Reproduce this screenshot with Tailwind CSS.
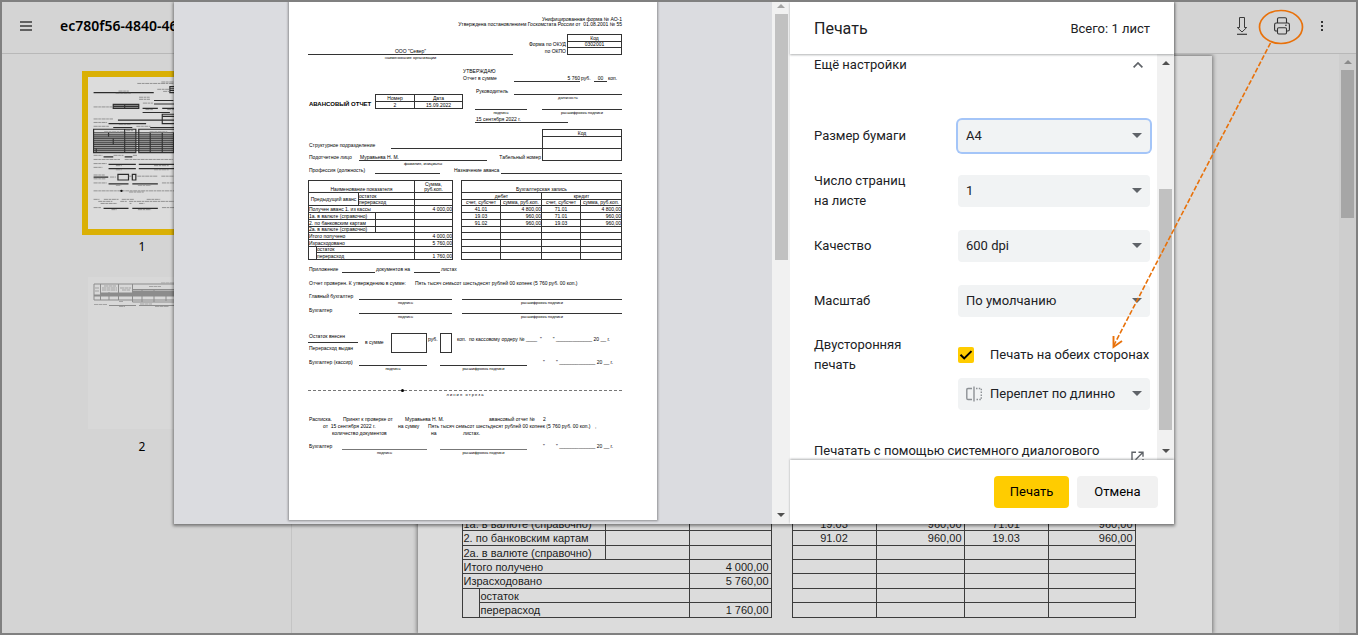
<!DOCTYPE html>
<html lang="ru">
<head>
<meta charset="utf-8">
<meta name="viewport" content="width=device-width, initial-scale=1">
<title>Печать</title>
<script src="https://cdn.jsdelivr.net/npm/@tailwindcss/browser@4"></script>
</head>
<body class="font-['Roboto',sans-serif] text-[#202124]">
<div class="relative flex h-screen flex-col overflow-hidden border-2 border-[#808080] bg-[#d4d4d4]">

  <!-- Viewer toolbar -->
  <header class="flex h-[52px] shrink-0 items-center border-b border-[#b8b8b8] pl-[18px] pr-[14px]">
    <button type="button" aria-label="Меню" class="mt-[-4px]">
      <svg class="block" width="12" height="10" viewBox="0 0 12 10" stroke="#3a3a3a" stroke-width="1.4"><path d="M0 1h12M0 5h12M0 9h12"/></svg>
    </button>
    <h1 class="mb-1 ml-7 font-['Noto_Sans',sans-serif] text-sm font-semibold text-black">ec780f56-4840-46</h1>
    <div class="mb-1 ml-auto flex items-center">
      <button type="button" aria-label="Скачать" class="flex w-10 justify-center">
        <svg width="12" height="18" viewBox="0 0 12 18" fill="none" stroke="#3a3a3a"><path d="M3.500 .5h5v10h2.200L6 15 1.300 10.500h2.200z"/><path d="M1 17.300h10" stroke-width="1.200"/></svg>
      </button>
      <button type="button" aria-label="Печать документа" class="flex w-10 justify-center">
        <svg width="16" height="18" viewBox="0 0 16 18" fill="none" stroke="#333" stroke-width="1.100"><path d="M3.500 6V2q0-1.300 1.300-1.300h6.400q1.300 0 1.300 1.300v4"/><path d="M3.500 14H2.200Q.6 14 .6 12.500V7.700Q.6 6 2.200 6h11.600q1.600 0 1.600 1.700v4.800q0 1.500-1.600 1.500h-1.300"/><rect x="3.500" y="10.800" width="9" height="6.200" rx="1.200"/><path d="M11 8.300h1.800"/></svg>
      </button>
      <button type="button" aria-label="Ещё" class="flex w-10 justify-center">
        <svg width="4" height="12" viewBox="0 0 4 12" fill="#333"><path d="M1 1h2v2H1zM1 5h2v2H1zM1 9h2v2H1z"/></svg>
      </button>
    </div>
  </header>

  <div class="flex min-h-0 flex-1">
    <!-- Thumbnails -->
    <aside class="flex w-[290px] shrink-0 flex-col items-center border-r border-[#c4c4c4] pr-[9px] pt-[17px] font-['Noto_Sans',sans-serif] text-xs text-black">
      <div class="border-[6px] border-[#dab005] bg-[#dcdcdc]">
        <svg class="block" width="108" height="152" viewBox="0 0 368 518" fill="none" stroke="#2c2c2c">
          <g stroke-width="4">
            <path d="M19 53h205M225 80h66M225 92h108M186 107h52M253 107h80M186 121h93M102 147h231M70 159h128M86 172h65M212 172h121M53 272h33M125 272h26M70 298h93M173 298h160M70 312h93M173 312h160M19 341h50M70 364h68M151 364h87M53 448h85M151 448h87"/>
            <path d="M279 33h54v20h-54zM279 40h54M279 46h54M86 93h87v14H86zM86 100h87M125 93v14M253 127h80v32h-80zM253 134h80"/>
            <path d="M19 178h144v80H19zM173 178h160v80H173zM125 178v80M212 190v68M253 190v68M292 190v68M86 210v20M70 190v14M28 244v14"/>
            <path d="M102 332h36v19h-36zM151 332h12v19h-12z"/>
          </g>
          <path d="M19 190h314M19 197h314M19 204h314M19 210h314M19 217h314M19 224h314M19 230h314M19 237h314M19 244h314M19 250h314" stroke-width="3"/>
          <path d="M19 193h144v64H19zM173 193h160v64H173z" fill="#444" fill-opacity=".4" stroke="none"/>
          <path d="M86 93h87v14H86z" fill="#444" fill-opacity=".4" stroke="none"/>
          <g stroke="#8a8a8a" stroke-width="3" stroke-dasharray="14 2 9 2">
            <path d="M250 17h83M168 22h165M104 48h35M94 56h54M236 42h42M256 49h22M174 69h36M174 76h37M187 89h34M19 102h66M196 111h25M270 111h40M19 143h66M19 155h46M105 162h40M19 168h54M165 168h48M55 187h68M130 183h24M210 187h60M19 267h30M87 267h34M153 267h14M19 281h90M125 281h165M19 295h45M19 308h30M95 302h20M225 302h50M95 316h20M225 316h50M19 334h38M75 341h20M139 338h10M168 338h70M250 338h70M19 347h40M19 361h45M95 369h18M170 369h45M252 361h70M19 388h314M140 392h50M19 417h20M54 417h50M115 417h42M200 417h46M35 424h48M110 424h22M140 424h165M43 431h56M142 431h6M174 431h18M19 445h26M80 452h18M170 452h45M252 445h70"/>
          </g>
          <circle cx="114" cy="388" r="4" fill="#111" stroke="none"/>
        </svg>
      </div>
      <p class="h-[42px] pt-1 leading-4">1</p>
      <div class="bg-[#d8d8d8]">
        <svg class="block" width="108" height="152" viewBox="0 0 108 152" fill="none" stroke="#8c8c8c">
          <path d="M6 7h102M6 7v16h102M12.500 7v16M30.500 7v16M44.500 7v18H108M66 13v12M54 13v12M78 15v9M44.500 12.500H108M21 15v8"/>
          <path d="M13 16.500h31M45 14.500h63M6 18.500h102M45 16.500h63" stroke-width="2"/>
          <path d="M21 28.500h27M51 28.500h57"/>
          <path d="M7 11h4M7 14h4M16 9h12M14 11h15M14 13h15M32 11h11M34 13h8M61 9.500h12M73 6h35M6 27.500h13M52 27h12M31 24.500h4M31 29.500h6M67 29.500h14" stroke="#a3a3a3" stroke-dasharray="4 .5"/>
        </svg>
      </div>
      <p class="h-8 pt-[10px] leading-4">2</p>
    </aside>

    <!-- Opened document -->
    <main class="flex min-w-0 flex-1 justify-center overflow-hidden pr-[2px] pt-[2px]">
      <article class="w-[794px] shrink-0 bg-[#dcdcdc] pl-[44px] pt-[460px] font-['Liberation_Sans',sans-serif] text-[11px] leading-3 text-[#1c1c1c] shadow-[0_0_4px_1px_rgba(0,0,0,0.45)]">
        <div class="flex items-start gap-5">
          <table class="w-[309px] table-fixed border-collapse [&_td]:border [&_td]:border-[#3c3c3c] [&_td]:p-0 [&_td]:pl-px [&_td]:pr-[2px]">
            <colgroup><col class="w-[17px]"><col class="w-[126px]"><col class="w-[84px]"><col class="w-[82px]"></colgroup>
            <tbody>
              <tr class="h-[14px]"><td colspan="2">1а. в валюте (справочно)</td><td></td><td></td></tr>
              <tr class="h-[15px]"><td colspan="2">2. по банковским картам</td><td></td><td></td></tr>
              <tr class="h-[14px]"><td colspan="2">2а. в валюте (справочно)</td><td></td><td></td></tr>
              <tr class="h-[14px]"><td colspan="3">Итого получено</td><td class="text-right">4 000,00</td></tr>
              <tr class="h-[15px]"><td colspan="3">Израсходовано</td><td class="text-right">5 760,00</td></tr>
              <tr class="h-[14px]"><td rowspan="2"></td><td colspan="2">остаток</td><td></td></tr>
              <tr class="h-[15px]"><td colspan="2">перерасход</td><td class="text-right">1 760,00</td></tr>
            </tbody>
          </table>
          <table class="w-[343px] table-fixed border-collapse [&_td]:border [&_td]:border-[#3c3c3c] [&_td]:p-0 [&_td]:px-[2px] [&_td:nth-child(even)]:text-right [&_td:nth-child(odd)]:text-center">
            <colgroup><col class="w-[84px]"><col class="w-[88px]"><col class="w-[84px]"><col class="w-[87px]"></colgroup>
            <tbody>
              <tr class="h-[14px]"><td>19.03</td><td>960,00</td><td>71.01</td><td>960,00</td></tr>
              <tr class="h-[15px]"><td>91.02</td><td>960,00</td><td>19.03</td><td>960,00</td></tr>
              <tr class="h-[14px]"><td></td><td></td><td></td><td></td></tr>
              <tr class="h-[14px]"><td></td><td></td><td></td><td></td></tr>
              <tr class="h-[15px]"><td></td><td></td><td></td><td></td></tr>
              <tr class="h-[14px]"><td></td><td></td><td></td><td></td></tr>
              <tr class="h-[15px]"><td></td><td></td><td></td><td></td></tr>
            </tbody>
          </table>
        </div>
      </article>
    </main>

    <!-- Viewer scrollbar -->
    <div class="flex w-[17px] shrink-0 flex-col items-center bg-[#cecece] pt-[6px]">
      <svg width="8" height="4" viewBox="0 0 8 4" fill="#8a8a8a"><path d="M4 0l4 4H0z"/></svg>
      <div class="mt-[6px] h-[148px] w-[13px] bg-[#a6a6a6]"></div>
    </div>
  </div>

  <!-- Print dialog -->
  <div class="absolute inset-0 flex items-start justify-center pr-[10px]">
    <section role="dialog" aria-label="Печать" class="flex h-[522px] w-[1000px] max-w-full bg-white shadow-[0_1px_3px_1px_rgba(0,0,0,0.45)]">

      <!-- Preview -->
      <div class="flex min-w-0 flex-1 justify-center overflow-hidden bg-[#dbdce0]">
        <article class="h-[518px] w-[368px] shrink-0 whitespace-nowrap bg-white pl-[19px] pr-[35px] pt-[15px] font-['Liberation_Sans',sans-serif] text-[5px] leading-[6px] text-black shadow-[0_0_2px_1px_rgba(0,0,0,0.35)]">
          <div class="text-right leading-[5px]">
            <p>Унифицированная форма № АО-1</p>
            <p>Утверждена постановлением Госкомстата России от&nbsp; 01.08.2001 № 55</p>
          </div>

          <div class="mt-[7px] flex h-[26px]">
            <div class="w-[205px] pt-[14px] text-center">
              <p class="h-[7px] border-b border-[#333]">ООО "Север"</p>
              <p class="text-[4px] leading-[5px]">наименование организации</p>
            </div>
            <div class="flex-1 pr-px pt-[7px] text-right leading-[7px]"><p>Форма по ОКУД</p><p>по ОКПО</p></div>
            <table class="h-[21px] w-[55px] border-collapse text-center leading-[5px] [&_td]:border [&_td]:border-[#333] [&_td]:p-0">
              <tbody><tr class="h-[7px]"><td>Код</td></tr><tr class="h-[6px]"><td>0302001</td></tr><tr class="h-[7px]"><td></td></tr></tbody>
            </table>
          </div>

          <div class="flex">
            <div class="flex w-[154px] items-start pt-[34px]">
              <h2 class="w-[67px] shrink-0 pl-px pt-[7px] text-[6px] font-bold leading-[7px] text-black">АВАНСОВЫЙ ОТЧЕТ</h2>
              <table class="w-[87px] table-fixed border-collapse text-center leading-[5px] [&_td]:border [&_td]:border-[#333] [&_td]:p-0">
                <colgroup><col class="w-[39px]"><col class="w-[48px]"></colgroup>
                <tbody><tr class="h-[7px]"><td>Номер</td><td>Дата</td></tr><tr class="h-[7px]"><td>2</td><td>15.09.2022</td></tr></tbody>
              </table>
            </div>
            <div class="w-[160px] pt-2">
              <p class="pl-px">УТВЕРЖДАЮ</p>
              <p class="mt-px flex h-[7px]"><span class="w-[52px] pl-px">Отчет в сумме</span><span class="w-[66px] border-b border-[#333] text-right">5 760</span><span class="w-[14px] pl-px">руб.</span><span class="w-[13px] border-b border-[#333] text-center">00</span><span class="pl-px">коп.</span></p>
              <p class="mt-[6px] flex h-[7px]"><span class="w-[52px] pl-[14px]">Руководитель</span><span class="flex-1 border-b border-[#333]"></span></p>
              <p class="pl-[52px] text-center text-[4px] leading-[5px]">должность</p>
              <div class="mt-[9px] flex justify-between pl-[13px] text-center text-[4px] leading-[5px]"><p class="w-[52px] border-t border-[#333]">подпись</p><p class="w-[80px] border-t border-[#333]">расшифровка подписи</p></div>
              <p class="ml-[13px] mt-px h-[7px] w-[93px] border-b border-[#333] pl-px">15 сентября 2022 г.</p>
            </div>
          </div>

          <div class="mt-[6px] flex h-[37px]">
            <div class="w-[234px] pt-[13px]">
              <p class="flex h-[7px]"><span class="w-[83px] pl-px">Структурное подразделение</span><span class="flex-1 border-b border-[#333]"></span></p>
              <p class="mt-[5px] flex h-[7px]"><span class="w-[51px] pl-px">Подотчетное лицо</span><span class="w-[128px] border-b border-[#333] pl-px">Муравьева Н. М.</span><span class="flex-1 pr-px text-right">Табельный номер</span></p>
              <p class="ml-[51px] w-[128px] text-center text-[4px] leading-[5px]">фамилия, инициалы</p>
            </div>
            <table class="h-[32px] w-[80px] border-collapse text-center leading-[5px] [&_td]:border [&_td]:border-[#333] [&_td]:p-0">
              <tbody><tr class="h-[7px]"><td>Код</td></tr><tr class="h-[12px]"><td></td></tr><tr class="h-[12px]"><td></td></tr></tbody>
            </table>
          </div>
          <p class="mt-px flex h-[7px]"><span class="w-[67px] pl-px">Профессия (должность)</span><span class="w-[65px] border-b border-[#333]"></span><span class="w-[61px] pl-[14px]">Назначение аванса</span><span class="flex-1 border-b border-[#333]"></span></p>

          <div class="mt-[6px] flex items-start justify-between leading-[5px]">
            <table class="w-[144px] shrink-0 table-fixed border-collapse [&_td]:border [&_td]:border-[#333] [&_td]:p-0">
              <colgroup><col class="w-[8px]"><col class="w-[42px]"><col class="w-[17px]"><col class="w-[39px]"><col class="w-[38px]"></colgroup>
              <tbody>
                <tr class="h-[12px]"><td colspan="4" class="text-center align-bottom">Наименование показателя</td><td class="text-center">Сумма,<br>руб.коп.</td></tr>
                <tr class="h-[7px]"><td colspan="2" rowspan="2" class="text-center">Предыдущий аванс</td><td colspan="2">остаток</td><td></td></tr>
                <tr class="h-[6px]"><td colspan="2">перерасход</td><td></td></tr>
                <tr class="h-[7px]"><td colspan="4">Получен аванс 1. из кассы</td><td class="text-right">4 000,00</td></tr>
                <tr class="h-[7px]"><td colspan="3">1а. в валюте (справочно)</td><td></td><td></td></tr>
                <tr class="h-[7px]"><td colspan="3">2. по банковским картам</td><td></td><td></td></tr>
                <tr class="h-[6px]"><td colspan="3">2а. в валюте (справочно)</td><td></td><td></td></tr>
                <tr class="h-[7px]"><td colspan="4">Итого получено</td><td class="text-right">4 000,00</td></tr>
                <tr class="h-[7px]"><td colspan="4">Израсходовано</td><td class="text-right">5 760,00</td></tr>
                <tr class="h-[6px]"><td rowspan="2"></td><td colspan="3">остаток</td><td></td></tr>
                <tr class="h-[7px]"><td colspan="3">перерасход</td><td class="text-right">1 760,00</td></tr>
              </tbody>
            </table>
            <table class="w-[160px] shrink-0 table-fixed border-collapse text-center [&_td]:border [&_td]:border-[#333] [&_td]:p-0">
              <colgroup><col class="w-[39px]"><col class="w-[41px]"><col class="w-[39px]"><col class="w-[41px]"></colgroup>
              <tbody>
                <tr class="h-[12px]"><td colspan="4" class="align-bottom">Бухгалтерская запись</td></tr>
                <tr class="h-[7px]"><td colspan="2">дебет</td><td colspan="2">кредит</td></tr>
                <tr class="h-[6px]"><td>счет, субсчет</td><td>сумма, руб.коп.</td><td>счет, субсчет</td><td>сумма, руб.коп.</td></tr>
                <tr class="h-[7px]"><td>41.01</td><td class="text-right">4 800,00</td><td>71.01</td><td class="text-right">4 800,00</td></tr>
                <tr class="h-[7px]"><td>19.03</td><td class="text-right">960,00</td><td>71.01</td><td class="text-right">960,00</td></tr>
                <tr class="h-[7px]"><td>91.02</td><td class="text-right">960,00</td><td>19.03</td><td class="text-right">960,00</td></tr>
                <tr class="h-[6px]"><td></td><td></td><td></td><td></td></tr>
                <tr class="h-[7px]"><td></td><td></td><td></td><td></td></tr>
                <tr class="h-[7px]"><td></td><td></td><td></td><td></td></tr>
                <tr class="h-[6px]"><td></td><td></td><td></td><td></td></tr>
                <tr class="h-[7px]"><td></td><td></td><td></td><td></td></tr>
              </tbody>
            </table>
          </div>

          <p class="mt-[6px] flex h-[7px]"><span class="w-[34px] pl-px">Приложение</span><span class="w-[33px] border-b border-[#333]"></span><span class="w-[39px] pl-px">документов на</span><span class="w-[26px] border-b border-[#333]"></span><span class="pl-px">листах</span></p>
          <p class="mt-[7px] flex"><span class="w-[107px] pl-px">Отчет проверен. К утверждению в сумме:</span><span>Пять тысяч семьсот шестьдесят рублей 00 копеек (5 760 руб. 00 коп.)</span></p>

          <p class="mt-[7px] flex h-[7px]"><span class="w-[51px] pl-px">Главный бухгалтер</span><span class="w-[93px] border-b border-[#333]"></span><span class="ml-[10px] flex-1 border-b border-[#333]"></span></p>
          <p class="flex pl-[51px] text-center text-[4px] leading-[5px]"><span class="w-[93px]">подпись</span><span class="ml-[10px] flex-1">расшифровка подписи</span></p>
          <p class="mt-[2px] flex h-[7px]"><span class="w-[51px] pl-px">Бухгалтер</span><span class="w-[93px] border-b border-[#333]"></span><span class="ml-[10px] flex-1 border-b border-[#333]"></span></p>
          <p class="flex pl-[51px] text-center text-[4px] leading-[5px]"><span class="w-[93px]">подпись</span><span class="ml-[10px] flex-1">расшифровка подписи</span></p>

          <div class="mt-[14px] flex h-5">
            <div class="w-[50px]"><p class="h-[10px] border-b border-[#333] pl-px">Остаток внесен</p><p class="pl-px pt-[2px]">Перерасход выдан</p></div>
            <p class="w-[33px] pl-[7px] pt-[6px]">в сумме</p>
            <div class="w-[36px] border border-[#333]"></div>
            <p class="w-[13px] pl-px pt-[3px]">руб.</p>
            <div class="w-[12px] border border-[#333]"></div>
            <p class="pl-[5px] pt-[3px]">коп.&nbsp; по кассовому ордеру № ____</p>
            <p class="flex flex-1 justify-between pl-[3px] pr-[12px] pt-[3px]"><span>"</span><span>" _____________ 20 __ г.</span></p>
          </div>

          <p class="mt-[6px] flex h-[7px]"><span class="w-[51px] pl-px">Бухгалтер (кассир)</span><span class="w-[68px] border-b border-[#333]"></span><span class="ml-[13px] w-[87px] border-b border-[#333]"></span><span class="ml-4 w-[13px]">"</span><span>" _____________ 20 __ г.</span></p>
          <p class="flex pl-[51px] text-center text-[4px] leading-[5px]"><span class="w-[68px]">подпись</span><span class="ml-[13px] w-[87px]">расшифровка подписи</span></p>

          <div class="mt-[18px] flex h-[3px] items-center"><span class="w-[93px] border-t border-dashed border-[#777]"></span><span class="size-[3px] shrink-0 rounded-full bg-black"></span><span class="flex-1 border-t border-dashed border-[#777]"></span></div>
          <p class="text-center text-[4px] leading-[5px]">л и н и я &nbsp; о т р е з а</p>

          <div class="mt-[19px] leading-[7px]">
            <p class="flex"><span class="w-[35px] pl-px">Расписка.</span><span class="w-[62px]">Принят к проверке от</span><span class="w-[84px]">Муравьева Н. М.</span><span class="w-[54px]">авансовый отчет №</span><span>2</span></p>
            <p class="flex pl-[15px]"><span class="w-[75px]">от&nbsp; 15 сентября 2022 г.</span><span class="w-[30px]">на сумму</span><span class="w-[167px]">Пять тысяч семьсот шестьдесят рублей 00 копеек (5 760 руб. 00 коп.)</span><span>,</span></p>
            <p class="flex pl-6"><span class="w-[99px]">количество документов</span><span class="w-8">на</span><span>листах.</span></p>
          </div>
          <p class="mt-[6px] flex h-[7px]"><span class="w-[34px] pl-px">Бухгалтер</span><span class="w-[85px] border-b border-[#777]"></span><span class="ml-[13px] w-[87px] border-b border-[#777]"></span><span class="ml-4 w-[13px]">"</span><span>" _____________ 20 __ г.</span></p>
          <p class="flex pl-[34px] text-center text-[4px] leading-[5px]"><span class="w-[85px]">подпись</span><span class="ml-[13px] w-[87px]">расшифровка подписи</span></p>
        </article>
      </div>

      <!-- Preview scrollbar -->
      <div class="flex w-[18px] shrink-0 flex-col items-center bg-[#f1f1f1] pb-[7px] pt-[2px]">
        <svg width="8" height="4" viewBox="0 0 8 4" fill="#a3a3a3"><path d="M4 0l4 4H0z"/></svg>
        <div class="mt-[6px] h-[246px] w-[13px] bg-[#c1c1c1]"></div>
        <svg class="mt-auto" width="8" height="4" viewBox="0 0 8 4" fill="#505050"><path d="M0 0h8L4 4z"/></svg>
      </div>

      <!-- Settings -->
      <form class="flex w-[384px] shrink-0 flex-col text-[13px] leading-5">
        <div class="z-10 flex h-[52px] shrink-0 items-center justify-between bg-white px-6 pt-[2px] shadow-[0_1px_2px_rgba(60,64,67,0.4)]">
          <h2 class="text-base">Печать</h2>
          <p>Всего: 1 лист</p>
        </div>

        <div class="flex min-h-0 flex-1">
          <div class="min-w-0 flex-1 overflow-hidden pl-6 pr-[7px]">
            <button type="button" class="mb-8 flex h-[22px] w-full items-center justify-between pr-[7px]"><span>Ещё настройки</span>
              <svg width="10" height="6" viewBox="0 0 10 6" fill="none" stroke="#5f6368" stroke-width="1.700"><path d="M.6 5.400L5 1l4.400 4.400"/></svg>
            </button>

            <div class="flex h-[55px] items-center justify-between">
              <label for="paper" class="w-[120px]">Размер бумаги</label>
              <div class="relative w-48">
                <select id="paper" class="block h-8 w-full appearance-none rounded bg-[#f1f3f4] pl-2 ring-2 ring-[#a4c5f8]"><option>A4</option></select>
                <svg class="pointer-events-none absolute right-2 top-[13px]" width="10" height="5" viewBox="0 0 10 5" fill="#5f6368"><path d="M0 0h10L5 5z"/></svg>
              </div>
            </div>
            <div class="flex h-[55px] items-center justify-between">
              <label for="pages" class="w-[100px]">Число страниц на листе</label>
              <div class="relative w-48">
                <select id="pages" class="block h-8 w-full appearance-none rounded bg-[#f1f3f4] pl-2"><option>1</option></select>
                <svg class="pointer-events-none absolute right-2 top-[13px]" width="10" height="5" viewBox="0 0 10 5" fill="#5f6368"><path d="M0 0h10L5 5z"/></svg>
              </div>
            </div>
            <div class="flex h-[55px] items-center justify-between">
              <label for="quality" class="w-[120px]">Качество</label>
              <div class="relative w-48">
                <select id="quality" class="block h-8 w-full appearance-none rounded bg-[#f1f3f4] pl-2"><option>600 dpi</option></select>
                <svg class="pointer-events-none absolute right-2 top-[13px]" width="10" height="5" viewBox="0 0 10 5" fill="#5f6368"><path d="M0 0h10L5 5z"/></svg>
              </div>
            </div>
            <div class="flex h-[55px] items-center justify-between">
              <label for="scale" class="w-[120px]">Масштаб</label>
              <div class="relative w-48">
                <select id="scale" class="block h-8 w-full appearance-none rounded bg-[#f1f3f4] pl-2"><option>По умолчанию</option></select>
                <svg class="pointer-events-none absolute right-2 top-[13px]" width="10" height="5" viewBox="0 0 10 5" fill="#5f6368"><path d="M0 0h10L5 5z"/></svg>
              </div>
            </div>
            <div class="flex items-start justify-between pt-[7px]">
              <label for="binding" class="w-[100px]">Двусторонняя печать</label>
              <div class="w-48">
                <label for="duplex" class="flex h-10 items-center gap-4 whitespace-nowrap">
                  <span class="relative size-4">
                    <input id="duplex" type="checkbox" checked class="block size-4 appearance-none rounded-xs bg-[#ffcc00]">
                    <svg class="pointer-events-none absolute inset-0" width="16" height="16" viewBox="0 0 16 16" fill="none" stroke="#000" stroke-width="2"><path d="M2.500 7.800l3.700 3.600 7.300-7.300"/></svg>
                  </span>
                  Печать на обеих сторонах
                </label>
                <div class="relative mt-[3px]">
                  <select id="binding" class="block h-8 w-full appearance-none rounded bg-[#f1f3f4] pl-8"><option>Переплет по длинно</option></select>
                  <svg class="pointer-events-none absolute left-2 top-2" width="16" height="16" viewBox="0 0 16 16" fill="none" stroke="#8d9195" stroke-width="1.400"><path d="M6 2.500H2Q.8 2.500.8 3.700v8.600q0 1.200 1.200 1.200h4M8 .5v15"/><path d="M10 2.500h5.300v11H10" stroke-dasharray="1.500 1.300"/></svg>
                  <svg class="pointer-events-none absolute right-2 top-[13px]" width="10" height="5" viewBox="0 0 10 5" fill="#5f6368"><path d="M0 0h10L5 5z"/></svg>
                </div>
              </div>
            </div>
            <a href="#" class="mt-[31px] flex h-10 items-center justify-between pr-[6px]"><span class="self-start">Печатать с помощью системного диалогового</span>
              <svg class="mb-2" width="13" height="13" viewBox="0 0 13 13" fill="none" stroke="#5f6368" stroke-width="1.400"><path d="M5 1.200H1v11h11V8M7.500 1.200H12v4.500M12 1.200L4.500 8.700"/></svg>
            </a>
          </div>

          <div class="flex w-[17px] shrink-0 flex-col items-center bg-[#f1f1f1] py-[7px]">
            <svg width="8" height="4" viewBox="0 0 8 4" fill="#505050"><path d="M4 0l4 4H0z"/></svg>
            <div class="mt-[124px] h-[241px] w-[13px] bg-[#c1c1c1]"></div>
            <svg class="mt-auto" width="8" height="4" viewBox="0 0 8 4" fill="#505050"><path d="M0 0h8L4 4z"/></svg>
          </div>
        </div>

        <div class="z-10 flex h-16 shrink-0 items-center justify-end gap-2 bg-white pr-4 text-black shadow-[0_-1px_2px_rgba(60,64,67,0.4)]">
          <button type="submit" class="h-8 w-[75px] rounded bg-[#ffcc00]">Печать</button>
          <button type="button" class="h-8 w-[81px] rounded bg-[#f1f1f1]">Отмена</button>
        </div>
      </form>
    </section>
  </div>

  <!-- Callout from the print button to the duplex option -->
  <svg class="pointer-events-none absolute right-0 top-0 z-20" width="254" height="350" viewBox="0 0 254 350" fill="none" stroke="#e8710a">
    <ellipse cx="179" cy="25" rx="21.500" ry="16.500" stroke-width="1.700"/>
    <path d="M168.500 41L12 343" stroke-width="1.600" stroke-dasharray="5 2"/>
    <path d="M11.500 334v11l8.500-6" stroke-width="1.900"/>
  </svg>
</div>
</body>
</html>
